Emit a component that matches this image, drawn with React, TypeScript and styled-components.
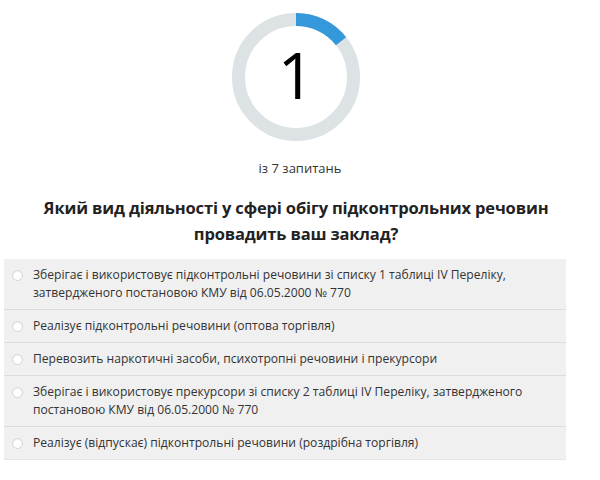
import React from 'react';
import styled, { createGlobalStyle } from 'styled-components';

const GlobalStyle = createGlobalStyle`
  html, body {
    margin: 0;
    padding: 0;
    background: #ffffff;
  }
  body {
    font-family: "Open Sans", "Noto Sans", sans-serif;
    color: #333333;
  }
`;

const Page = styled.div`
  width: 592px;
  display: flex;
  flex-direction: column;
  align-items: center;
  padding-top: 13px;
`;

const Progress = styled.div`
  position: relative;
  width: 128px;
  height: 128px;
`;

const ProgressNumber = styled.div`
  position: absolute;
  inset: 0;
  display: flex;
  align-items: center;
  justify-content: center;
  font-family: "Open Sans", sans-serif;
  font-weight: 400;
  font-size: 64px;
  color: #000000;
  line-height: 1;
  padding-bottom: 4px;
`;

const Counter = styled.div`
  margin-top: 18px;
  font-size: 13px;
  color: #333333;
  padding-left: 8px;
`;

const Question = styled.h2`
  margin: 18px 0 0;
  width: 580px;
  text-align: center;
  font-size: 16.5px;
  font-weight: 700;
  line-height: 26px;
  color: #222222;
  letter-spacing: -0.15px;
`;

const Options = styled.ul`
  list-style: none;
  margin: 12px 0 0 4px;
  padding: 0;
  width: 562px;
  background: #f0f0f0;
  align-self: flex-start;
`;

const Option = styled.li`
  display: flex;
  align-items: flex-start;
  gap: 10px;
  padding: 7px 10px 7px 8px;
  border-bottom: 1px solid #dcdcdc;
  font-size: 12.1px;
  line-height: 18px;
  color: #333333;

  &:last-child {
    border-bottom: 1px solid #e6e6e6;
  }
`;

const Radio = styled.span`
  flex: none;
  width: 9px;
  height: 9px;
  margin-top: 4px;
  border-radius: 50%;
  background: #ffffff;
  border: 1px solid #d4d4d4;
  box-shadow: inset 0 1px 1px rgba(0, 0, 0, 0.06);
`;

const OptionText = styled.span`
  flex: 1;
`;

const options = [
  'Зберігає і використовує підконтрольні речовини зі списку 1 таблиці IV Переліку, затвердженого постановою КМУ від 06.05.2000 № 770',
  'Реалізує підконтрольні речовини (оптова торгівля)',
  'Перевозить наркотичні засоби, психотропні речовини і прекурсори',
  'Зберігає і використовує прекурсори зі списку 2 таблиці IV Переліку, затвердженого постановою КМУ від 06.05.2000 № 770',
  'Реалізує (відпускає) підконтрольні речовини (роздрібна торгівля)',
];

const RING_R = 57.5;
const RING_LEN = 2 * Math.PI * RING_R;

const App: React.FC = () => {
  const current = 1;
  const total = 7;
  const done = (current / total) * RING_LEN;

  return (
    <>
      <GlobalStyle />
      <Page>
        <Progress>
          <svg width="128" height="128" viewBox="0 0 128 128">
            <circle cx="64" cy="64" r={RING_R} fill="none" stroke="#dde2e5" strokeWidth="13" />
            <circle
              cx="64"
              cy="64"
              r={RING_R}
              fill="none"
              stroke="#3498db"
              strokeWidth="13"
              strokeDasharray={`${done} ${RING_LEN}`}
              transform="rotate(-90 64 64)"
            />
          </svg>
          <ProgressNumber>{current}</ProgressNumber>
        </Progress>
        <Counter>із {total} запитань</Counter>
        <Question>Який вид діяльності у сфері обігу підконтрольних речовин провадить ваш заклад?</Question>
        <Options>
          {options.map((text) => (
            <Option key={text}>
              <Radio />
              <OptionText>{text}</OptionText>
            </Option>
          ))}
        </Options>
      </Page>
    </>
  );
};

export default App;
